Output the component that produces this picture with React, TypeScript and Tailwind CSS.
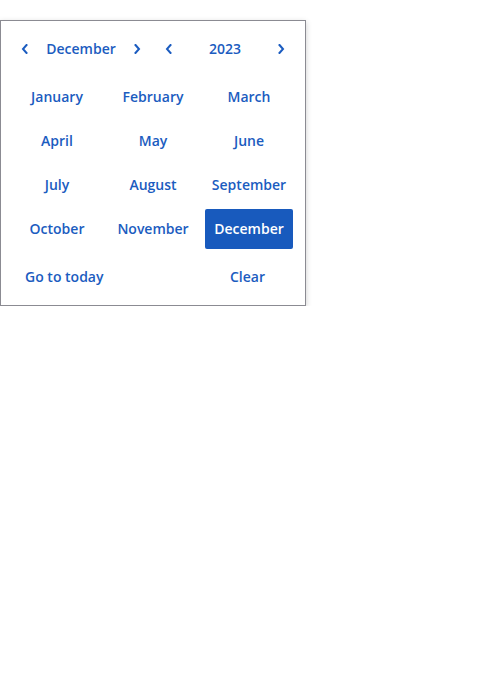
import { useState } from "react";

const MONTHS = [
  "January",
  "February",
  "March",
  "April",
  "May",
  "June",
  "July",
  "August",
  "September",
  "October",
  "November",
  "December",
];

function Chevron({ dir }: { dir: "left" | "right" }) {
  return (
    <svg width="8" height="10" viewBox="0 0 8 10" fill="none">
      <path
        d={dir === "left" ? "M5.5 1 L2 5 L5.5 9" : "M2.5 1 L6 5 L2.5 9"}
        stroke="currentColor"
        strokeWidth="2"
        strokeLinecap="square"
      />
    </svg>
  );
}

export default function App() {
  const [month, setMonth] = useState(11);
  const [year, setYear] = useState(2023);

  return (
    <div className="pt-[20px] font-['Open_Sans',sans-serif] text-[14px] font-semibold text-[#1b5cc0]">
      <div className="w-[306px] border border-[#8b8b92] bg-white px-3 py-2 shadow-[0_2px_6px_rgba(0,0,0,0.2)]">
        {/* Header */}
        <div className="flex h-10 gap-2">
          <div className="flex w-[136px] items-center justify-between">
            <button
              className="flex h-10 w-6 items-center justify-center pb-px"
              onClick={() => setMonth((month + 11) % 12)}
            >
              <Chevron dir="left" />
            </button>
            <span className="pb-0.5">{MONTHS[month]}</span>
            <button
              className="flex h-10 w-6 items-center justify-center pb-px"
              onClick={() => setMonth((month + 1) % 12)}
            >
              <Chevron dir="right" />
            </button>
          </div>
          <div className="flex w-[136px] items-center justify-between">
            <button
              className="flex h-10 w-6 items-center justify-center pb-px"
              onClick={() => setYear(year - 1)}
            >
              <Chevron dir="left" />
            </button>
            <span className="pb-0.5">{year}</span>
            <button
              className="flex h-10 w-6 items-center justify-center pb-px"
              onClick={() => setYear(year + 1)}
            >
              <Chevron dir="right" />
            </button>
          </div>
        </div>

        {/* Months */}
        <div className="mt-2 grid grid-cols-3 gap-x-2 gap-y-1">
          {MONTHS.map((m, i) => (
            <button
              key={m}
              onClick={() => setMonth(i)}
              className={
                i === month
                  ? "h-10 rounded-[2px] bg-[#185abd] pb-0.5 text-white"
                  : "h-10 rounded-[2px] pb-0.5"
              }
            >
              {m}
            </button>
          ))}
        </div>

        {/* Footer */}
        <div className="mt-2 grid h-10 grid-cols-3 gap-x-2">
          <button className="justify-self-start px-3 pb-0.5 whitespace-nowrap">Go to today</button>
          <div />
          <button className="pr-[3px] pb-0.5">Clear</button>
        </div>
      </div>
    </div>
  );
}
